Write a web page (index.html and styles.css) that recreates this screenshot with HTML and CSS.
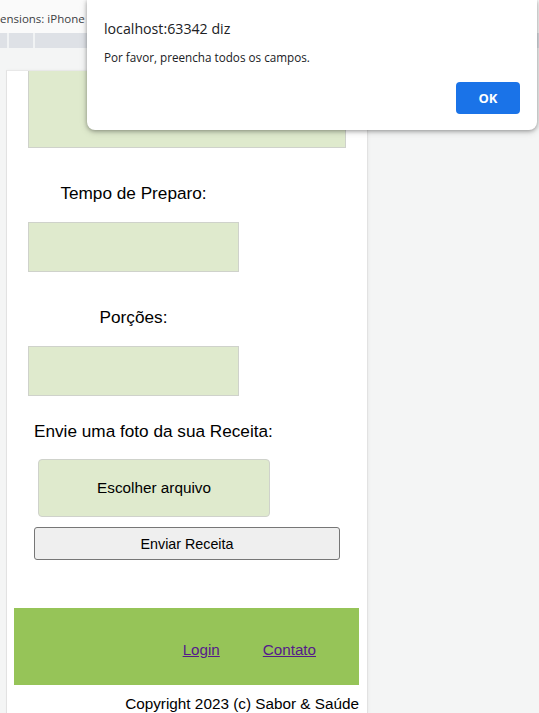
FILE: index.html
```html
<!DOCTYPE html>
<html lang="pt-BR">
<head>
<meta charset="utf-8">
<title>Sabor &amp; Saúde</title>
<link rel="stylesheet" href="styles.css">
</head>
<body>
<div class="devbar"><span class="devbar-text">ensions: iPhone SE ▾</span></div>
<div class="ruler"><span class="tick t1"></span><span class="tick t2"></span></div>
<div class="stage">
  <div class="phone">
    <div class="field field-big"></div>
    <div class="label">Tempo de Preparo:</div>
    <div class="field"></div>
    <div class="label">Porções:</div>
    <div class="field"></div>
    <div class="upload-label">Envie uma foto da sua Receita:</div>
    <div class="file-btn">Escolher arquivo</div>
    <button class="submit" type="button">Enviar Receita</button>
    <footer class="footer">
      <a class="flink" href="#login">Login</a>
      <a class="flink" href="#contato">Contato</a>
    </footer>
    <div class="copy">Copyright 2023 (c) Sabor &amp; Saúde</div>
  </div>
</div>
<div class="dialog">
  <div class="dlg-title">localhost:63342 diz</div>
  <div class="dlg-msg">Por favor, preencha todos os campos.</div>
  <div class="dlg-actions"><span class="ok">OK</span></div>
</div>
</body>
</html>
```
FILE: styles.css
```css
html, body {
  margin: 0;
  padding: 0;
  height: 100%;
  overflow: hidden;
}
body {
  background: #f4f5f5;
  display: flex;
  flex-direction: column;
  font-family: "Liberation Sans", Arial, sans-serif;
  position: relative;
}
.devbar {
  height: 33px;
  background: #fafafa;
  display: flex;
  align-items: center;
  white-space: nowrap;
  overflow: hidden;
}
.devbar-text {
  font-family: "Open Sans", "Noto Sans", sans-serif;
  font-size: 11.5px;
  color: #3c4043;
  padding-top: 3px;
}
.ruler {
  height: 15px;
  background: #dee1e6;
  display: flex;
}
.tick {
  width: 2px;
  height: 15px;
  background: #f1f3f4;
}
.t1 { margin-left: 7px; }
.t2 { margin-left: 24px; }
.stage {
  flex: 1;
  padding: 22px 0 0 6px;
  display: flex;
  min-height: 0;
}
.phone {
  width: 360px;
  background: #fff;
  border: 1px solid #e2e2e2;
  border-top-color: #e8e8e8;
  border-bottom: none;
  box-shadow: 1px 0 3px rgba(0,0,0,0.04);
  display: flex;
  flex-direction: column;
  align-items: flex-start;
}
.field {
  box-sizing: border-box;
  width: 211px;
  height: 50px;
  margin-left: 21px;
  background: #dfeacd;
  border: 1px solid #cfd2cb;
}
.field-big {
  width: 318px;
  height: 77px;
  border-top: none;
}
.label {
  width: 211px;
  margin-left: 21px;
  text-align: center;
  font-size: 17.2px;
  line-height: 18px;
  color: #000;
  margin-top: 36px;
  margin-bottom: 20px;
}
.upload-label {
  margin-left: 27px;
  margin-top: 26px;
  font-size: 17.2px;
  line-height: 18px;
  color: #000;
}
.file-btn {
  box-sizing: border-box;
  margin-top: 19px;
  margin-left: 31px;
  width: 232px;
  height: 58px;
  background: #dfeacd;
  border: 1px solid #cfd2cb;
  border-radius: 4px;
  display: flex;
  align-items: center;
  justify-content: center;
  font-size: 15.3px;
  color: #000;
}
.submit {
  box-sizing: border-box;
  margin: 10px 0 0 27px;
  width: 306px;
  height: 33px;
  background: #efefef;
  border: 1px solid #767676;
  border-radius: 3px;
  font-family: "Liberation Sans", Arial, sans-serif;
  font-size: 14.3px;
  color: #000;
  padding: 0;
}
.footer {
  box-sizing: border-box;
  margin: 48px 0 0 7px;
  width: 345px;
  height: 77px;
  background: #96c458;
  display: flex;
  justify-content: flex-end;
  align-items: flex-start;
  gap: 43px;
  padding: 33px 43px 0 0;
}
.flink {
  font-size: 15.2px;
  line-height: 18px;
  color: #551a8b;
  text-decoration: underline;
}
.copy {
  width: 352px;
  text-align: right;
  margin-top: 10px;
  font-size: 15.3px;
  line-height: 18px;
  color: #000;
}
.dialog {
  position: absolute;
  top: 0;
  left: 87px;
  width: 450px;
  height: 130px;
  box-sizing: border-box;
  background: #fff;
  border-radius: 0 0 8px 8px;
  box-shadow: 0 1px 4px rgba(0,0,0,0.35), 0 2px 8px rgba(0,0,0,0.12);
  padding: 19px 17px 0 17px;
  font-family: "Open Sans", "Noto Sans", sans-serif;
  color: #202124;
}
.dlg-title {
  font-size: 14.2px;
  line-height: 20px;
}
.dlg-msg {
  font-size: 11.7px;
  line-height: 16px;
  margin-top: 10px;
}
.dlg-actions {
  display: flex;
  justify-content: flex-end;
  margin-top: 17px;
}
.ok {
  width: 64px;
  height: 32px;
  background: #1a73e8;
  border-radius: 4px;
  color: #fff;
  font-weight: 700;
  font-size: 13px;
  display: flex;
  align-items: center;
  justify-content: center;
}
```
